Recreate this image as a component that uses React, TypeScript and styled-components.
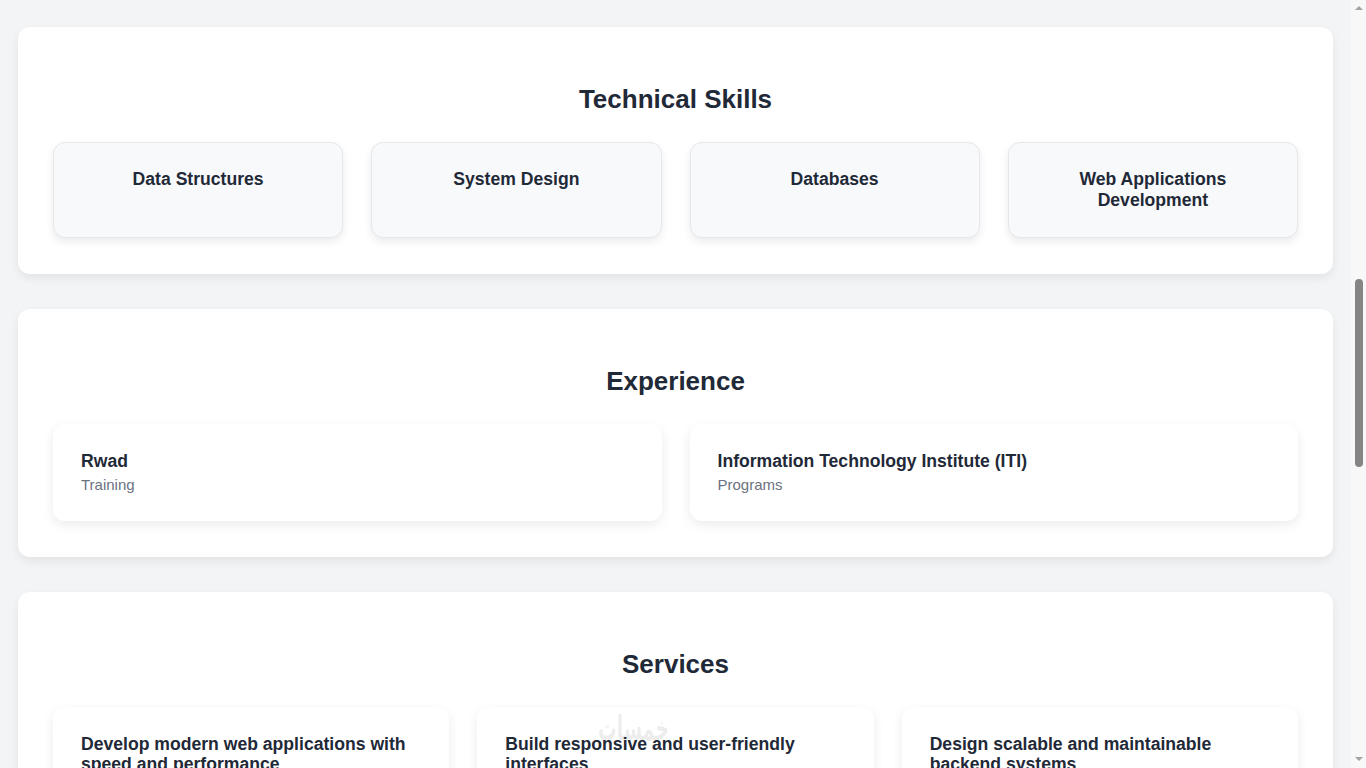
import styled, { createGlobalStyle } from 'styled-components'

const GlobalStyle = createGlobalStyle`
    * {
        box-sizing: border-box;
    }
    body {
        margin: 0;
        background: #f3f4f6;
        color: #1f2937;
        font-family: "Liberation Sans", Arial, sans-serif;
    }
`

const Page = styled.main`
    display: flex;
    flex-direction: column;
    gap: 35px;
    padding: 27px 33px 40px 18px;
`

const Section = styled.section`
    background: #ffffff;
    border-radius: 12px;
    box-shadow: 0 4px 10px rgba(0, 0, 0, 0.07);
    padding: 35px 35px 36px;
`

const SectionTitle = styled.h2`
    margin: 22px 0 28px;
    font-size: 26px;
    font-weight: 700;
    line-height: 30px;
    text-align: center;
    color: #1f2937;
`

const Grid = styled.div<{ $cols: number }>`
    display: grid;
    grid-template-columns: repeat(${p => p.$cols}, 1fr);
    gap: 28px;
`

const SkillCard = styled.div`
    background: #f8f9fb;
    border: 1px solid #e5e7eb;
    border-radius: 12px;
    box-shadow: 0 4px 8px rgba(0, 0, 0, 0.08);
    padding: 8px 20px 9px;
    text-align: center;
    & > h3 {
        margin: 17.6px 0;
        font-size: 17.6px;
        line-height: 21px;
        font-weight: 700;
    }
`

const InfoCard = styled.div`
    background: #ffffff;
    border-radius: 12px;
    box-shadow: 0 4px 12px rgba(0, 0, 0, 0.08);
    padding: 27px 28px 28px;
    & > h3 {
        margin: 0 0 5px;
        font-size: 17.6px;
        line-height: 20px;
        font-weight: 700;
        color: #1f2937;
    }
    & > p {
        margin: 0;
        font-size: 15px;
        line-height: 17px;
        color: #6b7280;
    }
`

const Watermark = styled.div`
    position: fixed;
    left: 598px;
    top: 708px;
    font-family: "DejaVu Sans", sans-serif;
    font-size: 34px;
    font-weight: 700;
    color: rgba(0, 0, 0, 0.07);
    pointer-events: none;
    direction: rtl;
    transform: scaleX(0.55);
    transform-origin: left center;
`

const Scrollbar = styled.div`
    position: fixed;
    top: 0;
    right: 0;
    bottom: 0;
    width: 15px;
    background: #f8f8f8;
    display: flex;
    flex-direction: column;
    align-items: center;
`

const Arrow = styled.div<{ $up?: boolean }>`
    width: 0;
    height: 0;
    margin: ${p => (p.$up ? '6px 0 0' : 'auto 0 7px')};
    border-left: 4.5px solid transparent;
    border-right: 4.5px solid transparent;
    ${p => (p.$up ? 'border-bottom' : 'border-top')}: 4.5px solid #a3a3a3;
`

const Thumb = styled.div`
    width: 8px;
    height: 188px;
    margin-top: 269px;
    border-radius: 4px;
    background: #858585;
`

const skills = ['Data Structures', 'System Design', 'Databases', 'Web Applications Development']

const experience = [
    { place: 'Rwad', kind: 'Training' },
    { place: 'Information Technology Institute (ITI)', kind: 'Programs' },
]

const services = [
    'Develop modern web applications with speed and performance',
    'Build responsive and user-friendly interfaces',
    'Design scalable and maintainable backend systems',
]

const App = () => {
    return (
        <>
            <GlobalStyle />
            <Page>
                <Section>
                    <SectionTitle>Technical Skills</SectionTitle>
                    <Grid $cols={4}>
                        {skills.map(s => (
                            <SkillCard key={s}>
                                <h3>{s}</h3>
                            </SkillCard>
                        ))}
                    </Grid>
                </Section>

                <Section>
                    <SectionTitle>Experience</SectionTitle>
                    <Grid $cols={2}>
                        {experience.map(e => (
                            <InfoCard key={e.place}>
                                <h3>{e.place}</h3>
                                <p>{e.kind}</p>
                            </InfoCard>
                        ))}
                    </Grid>
                </Section>

                <Section>
                    <SectionTitle>Services</SectionTitle>
                    <Grid $cols={3}>
                        {services.map(s => (
                            <InfoCard key={s}>
                                <h3>{s}</h3>
                            </InfoCard>
                        ))}
                    </Grid>
                </Section>
            </Page>
            <Watermark>خمسات</Watermark>
            <Scrollbar>
                <Arrow $up />
                <Thumb />
                <Arrow />
            </Scrollbar>
        </>
    );
}

export default App;
